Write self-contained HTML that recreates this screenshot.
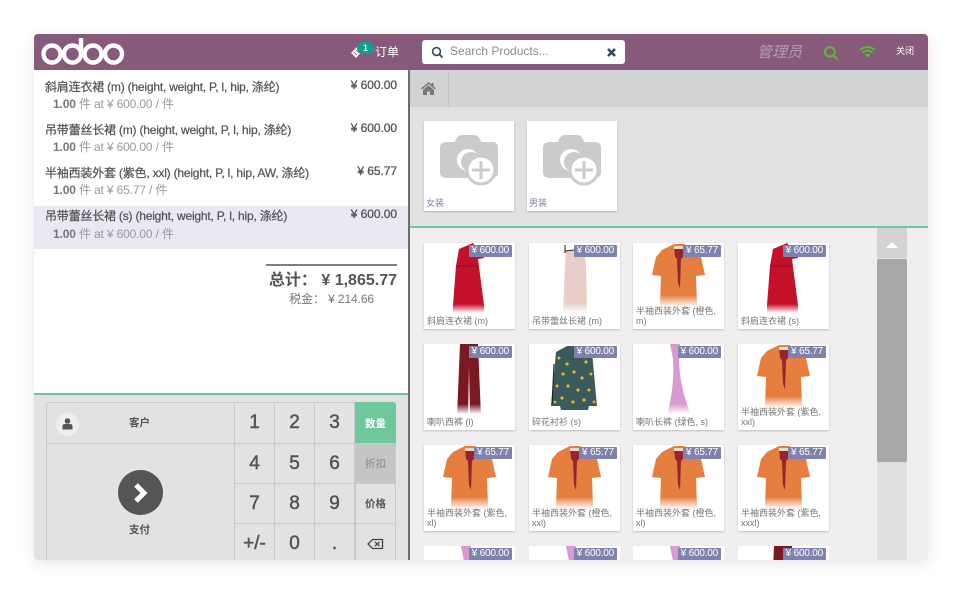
<!DOCTYPE html>
<html><head><meta charset="utf-8"><style>
html,body{margin:0;padding:0;background:#fff;width:962px;height:594px;overflow:hidden}
*{box-sizing:border-box}
body{font-family:"Liberation Sans","WenQuanYi Zen Hei","Noto Sans CJK SC",sans-serif;color:#555}
#w{position:absolute;left:34px;top:34px;width:894px;height:526px;border-radius:4px;overflow:hidden;box-shadow:0 4px 16px rgba(0,0,0,.1);background:#fff}
.a{position:absolute}
.l1{position:absolute;left:11px;font-size:12px;line-height:16px;color:#555;white-space:nowrap;letter-spacing:-.2px;-webkit-text-stroke:.25px #555}
.l2{position:absolute;left:19px;font-size:12px;line-height:16px;color:#999;white-space:nowrap;letter-spacing:-.15px}
.l2 b{color:#777;font-weight:bold}
.p{position:absolute;left:300px;width:63px;text-align:right;font-size:12px;line-height:16px;color:#555;white-space:nowrap;letter-spacing:-.05px;-webkit-text-stroke:.3px #555}
.k{position:absolute;background:#e2e2e2;border:1px solid #cacaca;text-align:center;color:#555;font-size:19px;-webkit-text-stroke:.5px #555;display:flex;align-items:center;justify-content:center}
.m{font-size:10.5px;font-weight:bold;color:#555;-webkit-text-stroke:0}
.c{position:absolute;width:91px;height:86px;background:#fff;box-shadow:0 1px 2px rgba(0,0,0,.2);overflow:hidden}
.c svg{position:absolute;left:0;top:0}
.t{position:absolute;right:3px;top:2px;height:12px;line-height:12px;background:#7f82ac;color:#fff;font-size:10px;padding:0 3px;border-radius:1px;white-space:nowrap;letter-spacing:-.2px}
.n{position:absolute;left:3px;right:2px;bottom:3px;font-size:9px;line-height:10px;color:#777}
.cat{position:absolute;top:87px;width:90px;height:90px;background:#fff;box-shadow:0 1px 2px rgba(0,0,0,.2)}
.cat span{position:absolute;left:2px;bottom:2px;font-size:9px;line-height:11px;color:#7f82ac}
.r{height:14px;box-shadow:none}
</style></head><body>
<svg width="0" height="0" style="position:absolute"><defs>
<linearGradient id="f" x1="0" y1="0" x2="0" y2="1"><stop offset="0" stop-color="#fff" stop-opacity="0"/><stop offset="1" stop-color="#fff"/></linearGradient>
<symbol id="dress" viewBox="0 0 91 72"><path d="M49 0L35 6 32 23 29 62V72H60V62L55 24 54 16 60 15 59 9 52 4Z" fill="#c5102a"/><path d="M32 23H54" stroke="#8f0a1e" stroke-width="1"/><rect x="25" y="61" width="40" height="9" fill="url(#f)"/><rect x="25" y="70" width="40" height="2" fill="#fff"/></symbol>
<symbol id="slip" viewBox="0 0 91 72"><path d="M37 8H55L57 22 58 72H34L36 22Z" fill="#e9cdc6"/><path d="M36 2V10M55 3V8M36 8L55 6" stroke="#222" stroke-width="1" fill="none"/><rect x="30" y="60" width="32" height="10" fill="url(#f)"/><rect x="30" y="70" width="32" height="2" fill="#fff"/></symbol>
<symbol id="jacket" viewBox="0 0 91 72"><path d="M41 1H51L62 7 68 14 72 32 63 33 64 62V72H27V62L28 33 19 32 23 14 29 7Z" fill="#e57e3f"/><path d="M41 3H51L50 14 48 16 47 45 45 40 44 16 42 14Z" fill="#952530"/><path d="M41 3H51V6H41Z" fill="#e8d8c8"/><rect x="20" y="52" width="50" height="12" fill="url(#f)"/><rect x="20" y="64" width="50" height="8" fill="#fff"/></symbol>
<symbol id="pants" viewBox="0 0 91 72"><path d="M36 0H54L57 72H46L45 22 44 72H33Z" fill="#7a1a20"/><rect x="30" y="60" width="30" height="10" fill="url(#f)"/><rect x="30" y="70" width="30" height="2" fill="#fff"/></symbol>
<symbol id="pink" viewBox="0 0 91 72"><path d="M37 0H47L46 15Q46 40 58 72H34Q42 40 40 15Z" fill="#d99ad2"/><rect x="30" y="60" width="32" height="10" fill="url(#f)"/><rect x="30" y="70" width="32" height="2" fill="#fff"/></symbol>
<symbol id="blouse" viewBox="0 0 91 72"><path d="M38 2H52L63 8 68 62H60L59 66H32L31 62H22L27 8Z" fill="#3b5a5c"/><g fill="#e6b91c"><circle cx="30" cy="14" r="1.5"/><circle cx="38" cy="20" r="1.6"/><circle cx="48" cy="12" r="1.6"/><circle cx="57" cy="18" r="1.6"/><circle cx="62" cy="30" r="1.5"/><circle cx="34" cy="30" r="1.6"/><circle cx="45" cy="28" r="1.6"/><circle cx="53" cy="34" r="1.6"/><circle cx="28" cy="42" r="1.5"/><circle cx="39" cy="42" r="1.6"/><circle cx="49" cy="46" r="1.6"/><circle cx="60" cy="46" r="1.5"/><circle cx="33" cy="54" r="1.6"/><circle cx="44" cy="58" r="1.6"/><circle cx="55" cy="56" r="1.6"/><circle cx="26" cy="58" r="1.4"/><circle cx="65" cy="58" r="1.4"/></g><path d="M25 20L23 60" stroke="#1a1a1a" stroke-width="1"/></symbol>
<symbol id="cam" viewBox="0 0 90 90"><path d="M22 21H31Q33 14 38 14H50Q55 14 57 21H68Q74 21 74 27V51Q74 57 68 57H22Q16 57 16 51V27Q16 21 22 21Z" fill="#cbcbcb"/><circle cx="44" cy="39" r="11" fill="#fff"/><circle cx="47" cy="41" r="10" fill="#cbcbcb"/><circle cx="57" cy="49" r="15.500" fill="#fff"/><circle cx="57" cy="49" r="14" fill="#fff" stroke="#cbcbcb" stroke-width="3"/><path d="M57 40V58M48 49H66" stroke="#cbcbcb" stroke-width="3"/></symbol>
</defs></svg>
<div id="w">
<!-- header -->
<div class="a" style="left:0;top:0;width:894px;height:36px;background:#875a7b"></div>
<svg class="a" style="left:0;top:0" width="100" height="36"><title>odoo</title><g fill="none" stroke="#fff" stroke-width="4.400"><circle cx="18" cy="20" r="8.500"/><circle cx="38.500" cy="20" r="8.500"/><circle cx="59" cy="20" r="8.500"/><circle cx="79.500" cy="20" r="8.500"/><path d="M47 20V4"/></g></svg>
<svg class="a" style="left:316px;top:11px" width="14" height="14"><path d="M1 8L7 2 12 6 6 13Z" fill="#fff"/><path d="M4 7L7 10M6 5L9 8" stroke="#875a7b" stroke-width=".8"/></svg>
<div class="a" style="left:323px;top:8px;width:17px;height:12px;border-radius:6px;background:#0f9d91;color:#fff;font-size:9px;font-weight:bold;line-height:12px;text-align:center">1</div>
<div class="a" style="left:341px;top:10px;font-size:12px;line-height:16px;color:#fff">订单</div>
<div class="a" style="left:388px;top:6px;width:203px;height:24px;background:#fff;border-radius:3px"></div>
<svg class="a" style="left:397px;top:12px" width="13" height="13"><circle cx="5.500" cy="5.500" r="3.900" fill="none" stroke="#35495e" stroke-width="1.600"/><path d="M8.300 8.300L11.500 11.500" stroke="#35495e" stroke-width="1.800"/></svg>
<div class="a" style="left:416px;top:10px;font-size:12px;line-height:15px;color:#8b8b8b">Search Products...</div>
<svg class="a" style="left:572px;top:13px" width="11" height="11"><path d="M2 2L9 9M9 2L2 9" stroke="#35495e" stroke-width="2.600"/></svg>
<div class="a" style="left:723px;top:10px;font-size:15px;line-height:18px;color:#b59db0;font-style:italic">管理员</div>
<svg class="a" style="left:789px;top:11px" width="16" height="16"><circle cx="6.800" cy="6.800" r="4.800" fill="none" stroke="#5cb82e" stroke-width="2"/><path d="M10.500 10.500L14.500 14.500" stroke="#5cb82e" stroke-width="2.200"/></svg>
<svg class="a" style="left:825px;top:11px" width="17" height="14"><g fill="none" stroke="#5cb82e" stroke-width="2"><path d="M1 5Q8.500 -1 16 5"/><path d="M3.500 7.800Q8.500 3.500 13.500 7.800"/></g><path d="M5.800 9.800Q8.500 7.800 11.200 9.800L8.500 13Z" fill="#5cb82e"/></svg>
<div class="a" style="left:862px;top:12px;font-size:9px;line-height:11px;color:#fff">关闭</div>

<!-- order -->
<div class="a" style="left:0;top:172px;width:374px;height:43px;background:#e8e9f2"></div>
<div class="l1" style="top:45px">斜肩连衣裙 (m) (height, weight, P, l, hip, 涤纶)</div>
<div class="l2" style="top:62px"><b>1.00</b> 件 at ¥ 600.00 / 件</div>
<div class="l1" style="top:88px">吊带蕾丝长裙 (m) (height, weight, P, l, hip, 涤纶)</div>
<div class="l2" style="top:105px"><b>1.00</b> 件 at ¥ 600.00 / 件</div>
<div class="l1" style="top:131px">半袖西装外套 (紫色, xxl) (height, P, l, hip, AW, 涤纶)</div>
<div class="l2" style="top:148px"><b>1.00</b> 件 at ¥ 65.77 / 件</div>
<div class="l1" style="top:174px">吊带蕾丝长裙 (s) (height, weight, P, l, hip, 涤纶)</div>
<div class="l2" style="top:192px"><b>1.00</b> 件 at ¥ 600.00 / 件</div>
<div class="p" style="top:43px">¥ 600.00</div>
<div class="p" style="top:86px">¥ 600.00</div>
<div class="p" style="top:129px">¥ 65.77</div>
<div class="p" style="top:172px">¥ 600.00</div>
<div class="a" style="left:232px;top:230px;width:131px;height:2px;background:#808080"></div>
<div class="a" style="left:200px;width:163px;top:237px;text-align:right;font-size:16px;line-height:20px;font-weight:bold;color:#555;white-space:nowrap">总计： ¥ 1,865.77</div>
<div class="a" style="left:200px;width:140px;top:258px;text-align:right;font-size:12px;line-height:15px;color:#777;white-space:nowrap;letter-spacing:-.1px">税金： ¥ 214.66</div>

<!-- divider -->
<div class="a" style="left:374px;top:36px;width:2px;height:490px;background:#6e6e6e"></div>

<!-- numpad -->
<div class="a" style="left:0;top:359px;width:374px;height:2px;background:#6ec89b"></div>
<div class="a" style="left:0;top:361px;width:374px;height:165px;background:#e2e2e2"></div>
<div class="k" style="left:12px;top:368px;width:189px;height:42px;border-top-left-radius:3px"></div>
<div class="a" style="left:22px;top:379px;width:23px;height:23px;border-radius:50%;background:#f0eeee"></div>
<svg class="a" style="left:28px;top:384px" width="11" height="12"><circle cx="5.500" cy="3" r="2.800" fill="#555"/><path d="M.5 11.500V8.500Q.5 6 3 6H8Q10.500 6 10.500 8.500V11.500Z" fill="#555"/></svg>
<div class="a m" style="left:95px;top:383px;line-height:12px">客户</div>
<div class="k" style="left:12px;top:409px;width:189px;height:130px"></div>
<div class="a" style="left:84px;top:436px;width:45px;height:45px;border-radius:50%;background:#555"></div>
<svg class="a" style="left:84px;top:436px" width="45" height="45"><path d="M18 15L26 23 18 31" fill="none" stroke="#fff" stroke-width="5"/></svg>
<div class="a m" style="left:95px;top:490px;line-height:12px">支付</div>
<div class="k" style="left:200px;top:368px;width:41px;height:42px">1</div>
<div class="k" style="left:240px;top:368px;width:41px;height:42px">2</div>
<div class="k" style="left:280px;top:368px;width:41px;height:42px">3</div>
<div class="k m" style="left:321px;top:368px;width:41px;height:42px;background:#6ec89b;color:#fff;border-color:#6ec89b;border-top-right-radius:3px">数量</div>
<div class="k" style="left:200px;top:409px;width:41px;height:41px">4</div>
<div class="k" style="left:240px;top:409px;width:41px;height:41px">5</div>
<div class="k" style="left:280px;top:409px;width:41px;height:41px">6</div>
<div class="k m" style="left:321px;top:409px;width:41px;height:41px;background:#c5c5c5;color:#a09c9c">折扣</div>
<div class="k" style="left:200px;top:449px;width:41px;height:41px">7</div>
<div class="k" style="left:240px;top:449px;width:41px;height:41px">8</div>
<div class="k" style="left:280px;top:449px;width:41px;height:41px">9</div>
<div class="k m" style="left:321px;top:449px;width:41px;height:41px">价格</div>
<div class="k" style="left:200px;top:489px;width:41px;height:41px">+/-</div>
<div class="k" style="left:240px;top:489px;width:41px;height:41px">0</div>
<div class="k" style="left:280px;top:489px;width:41px;height:41px">.</div>
<div class="k" style="left:321px;top:489px;width:41px;height:41px;-webkit-text-stroke:0"><svg width="17" height="12"><path d="M5.500 1.500H15.500V10.500H5.500L1 6Z" fill="none" stroke="#444" stroke-width="1.300"/><path d="M8 3.800L12.500 8.200M12.500 3.800L8 8.200" stroke="#444" stroke-width="1.300"/></svg></div>

<!-- breadcrumb -->
<div class="a" style="left:376px;top:36px;width:518px;height:37px;background:#d3d3d3"></div>
<div class="a" style="left:414px;top:36px;width:1px;height:37px;background:#c6c6c6"></div>
<svg class="a" style="left:386px;top:47px" width="17" height="15"><path d="M8.500 1L1 7.500 2 8.500 8.500 3 15 8.500 16 7.500 13.500 5.300V2H11.500V3.500Z" fill="#777"/><path d="M3 9L8.500 4.300 14 9V14H10V10.500H7V14H3Z" fill="#777"/></svg>

<!-- categories -->
<div class="a" style="left:376px;top:73px;width:518px;height:119px;background:#e2e2e2"></div>
<div class="a" style="left:376px;top:192px;width:518px;height:2px;background:#6ec89b"></div>
<div class="cat" style="left:390px"><svg width="90" height="90"><use href="#cam"/></svg><span>女装</span></div>
<div class="cat" style="left:493px"><svg width="90" height="90"><use href="#cam"/></svg><span>男装</span></div>

<!-- products -->
<div class="a" style="left:376px;top:194px;width:518px;height:332px;background:#f0eeee"></div>
<div class="a" style="left:843px;top:194px;width:30px;height:332px;background:#e0e0e0"></div>
<div class="a" style="left:843px;top:194px;width:30px;height:30px;background:#d3d3d3"></div>
<svg class="a" style="left:851px;top:207px" width="14" height="8"><path d="M7 1L13 7H1Z" fill="#fff"/></svg>
<div class="a" style="left:843px;top:225px;width:30px;height:203px;background:#a8a8a8;border-radius:2px"></div>

<div class="c" style="left:390px;top:209px"><svg width="91" height="72"><use href="#dress"/></svg><div class="t">¥ 600.00</div><div class="n">斜肩连衣裙 (m)</div></div>
<div class="c" style="left:495px;top:209px"><svg width="91" height="72"><use href="#slip"/></svg><div class="t">¥ 600.00</div><div class="n">吊带蕾丝长裙 (m)</div></div>
<div class="c" style="left:599px;top:209px"><svg width="91" height="72"><use href="#jacket"/></svg><div class="t">¥ 65.77</div><div class="n">半袖西装外套 (橙色, m)</div></div>
<div class="c" style="left:704px;top:209px"><svg width="91" height="72"><use href="#dress"/></svg><div class="t">¥ 600.00</div><div class="n">斜肩连衣裙 (s)</div></div>

<div class="c" style="left:390px;top:310px"><svg width="91" height="72"><use href="#pants"/></svg><div class="t">¥ 600.00</div><div class="n">喇叭西裤 (l)</div></div>
<div class="c" style="left:495px;top:310px"><svg width="91" height="72"><use href="#blouse"/></svg><div class="t">¥ 600.00</div><div class="n">碎花衬衫 (s)</div></div>
<div class="c" style="left:599px;top:310px"><svg width="91" height="72"><use href="#pink"/></svg><div class="t">¥ 600.00</div><div class="n">喇叭长裤 (绿色, s)</div></div>
<div class="c" style="left:704px;top:310px"><svg width="91" height="72"><use href="#jacket"/></svg><div class="t">¥ 65.77</div><div class="n">半袖西装外套 (紫色, xxl)</div></div>

<div class="c" style="left:390px;top:411px"><svg width="91" height="72"><use href="#jacket"/></svg><div class="t">¥ 65.77</div><div class="n">半袖西装外套 (紫色, xl)</div></div>
<div class="c" style="left:495px;top:411px"><svg width="91" height="72"><use href="#jacket"/></svg><div class="t">¥ 65.77</div><div class="n">半袖西装外套 (橙色, xxl)</div></div>
<div class="c" style="left:599px;top:411px"><svg width="91" height="72"><use href="#jacket"/></svg><div class="t">¥ 65.77</div><div class="n">半袖西装外套 (橙色, xl)</div></div>
<div class="c" style="left:704px;top:411px"><svg width="91" height="72"><use href="#jacket"/></svg><div class="t">¥ 65.77</div><div class="n">半袖西装外套 (紫色, xxxl)</div></div>

<div class="c r" style="left:390px;top:512px"><svg width="91" height="72"><use href="#pink"/></svg><div class="t">¥ 600.00</div></div>
<div class="c r" style="left:495px;top:512px"><svg width="91" height="72"><use href="#pink"/></svg><div class="t">¥ 600.00</div></div>
<div class="c r" style="left:599px;top:512px"><svg width="91" height="72"><use href="#pink"/></svg><div class="t">¥ 600.00</div></div>
<div class="c r" style="left:704px;top:512px"><svg width="91" height="72"><use href="#pants"/></svg><div class="t">¥ 600.00</div></div>
</div>
</body></html>
